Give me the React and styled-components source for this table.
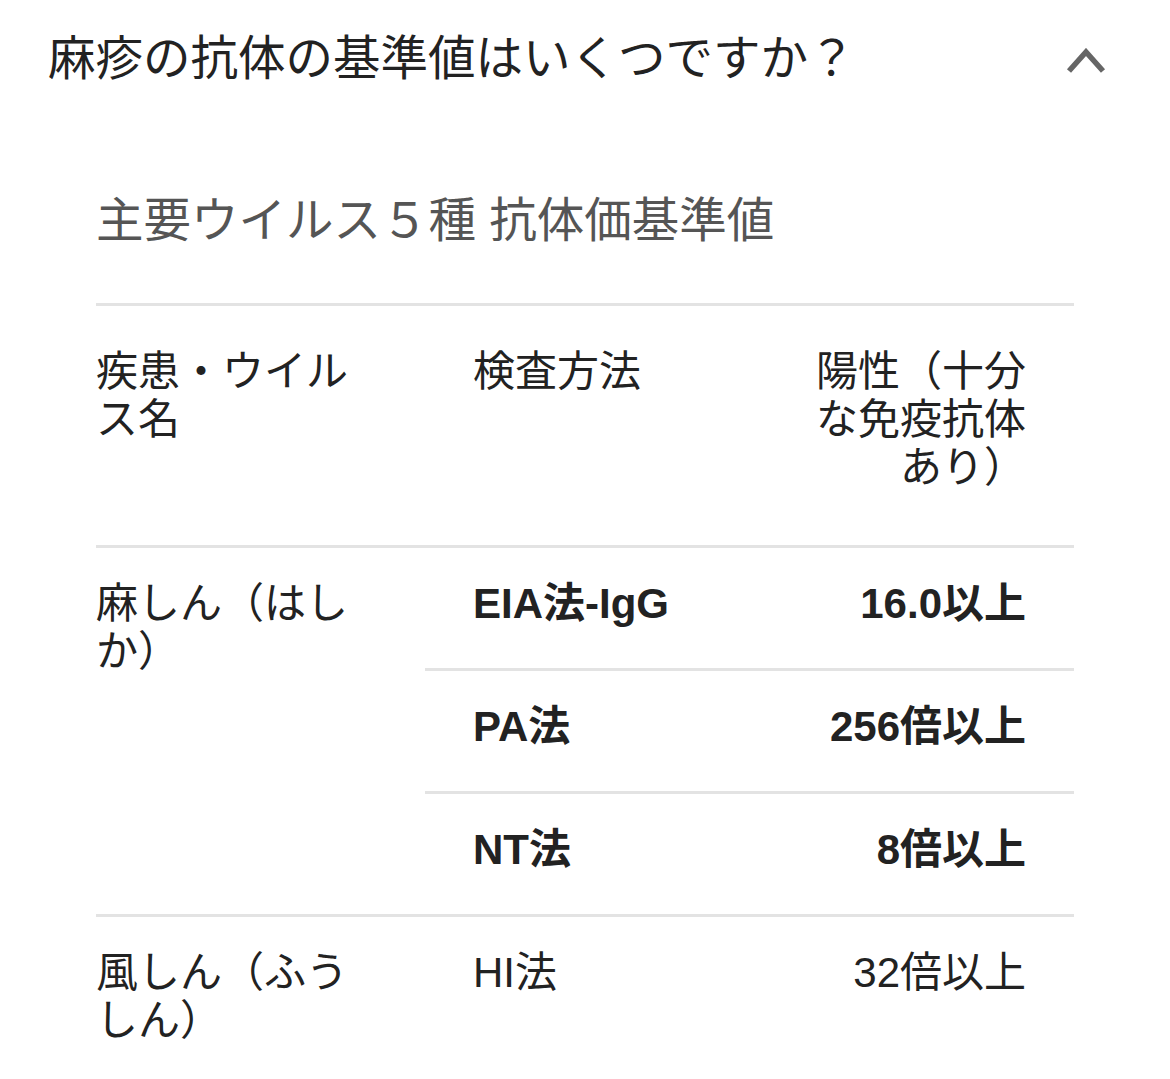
import React from 'react'
import styled, { createGlobalStyle } from 'styled-components'

const GlobalStyle = createGlobalStyle`
    html, body {
        margin: 0;
        padding: 0;
        background: #fff;
        overflow: hidden;
    }
    body {
        font-family: "Liberation Sans", "Noto Sans CJK JP", sans-serif;
        color: #222;
    }
`

const Page = styled.div`
    padding: 0 48px;
`
const Header = styled.div`
    display: flex;
    align-items: center;
    justify-content: space-between;
    height: 118px;
`
const Question = styled.h2`
    margin: 0;
    font-size: 47.5px;
    line-height: 56px;
    font-weight: 400;
    color: #222;
`
const Toggle = styled.button`
    display: flex;
    align-items: center;
    justify-content: center;
    width: 40px;
    height: 40px;
    margin: 4px 16px 0 0;
    padding: 0;
    border: 0;
    background: none;
`
const Panel = styled.div`
    padding: 75px 48px 0;
`
const Subtitle = styled.h3`
    margin: 0 0 54px;
    font-size: 47.5px;
    line-height: 56px;
    font-weight: 400;
    color: #555;
`
const Table = styled.table`
    width: 100%;
    border-collapse: collapse;
    table-layout: fixed;
`
const Cell = styled.td`
    box-sizing: border-box;
    width: ${p => p.$w || 'auto'};
    padding: ${p => (p.$head ? '42px 48px 53px' : '32px 48px 40px')};
    padding-left: ${p => (p.$first ? '0' : '48px')};
    border-top: 3px solid #e3e3e3;
    font-size: 42px;
    line-height: 48px;
    font-weight: ${p => (p.$bold ? 700 : 400)};
    text-align: ${p => (p.$right ? 'right' : 'left')};
    vertical-align: top;
    color: #222;
`

const Chevron = () => (
    <svg width="40" height="26" viewBox="0 0 40 26">
        <polyline points="3,23 20,4 37,23" fill="none" stroke="#666" strokeWidth="5.5" />
    </svg>
)

const rows = [
    {
        name: '麻しん（はしか）',
        tests: [
            { method: 'EIA法-IgG', value: '16.0以上', bold: true },
            { method: 'PA法', value: '256倍以上', bold: true },
            { method: 'NT法', value: '8倍以上', bold: true },
        ],
    },
    {
        name: '風しん（ふうしん）',
        tests: [{ method: 'HI法', value: '32倍以上' }],
    },
]

const App = () => {
    return (
        <Page>
            <GlobalStyle />
            <Header>
                <Question>麻疹の抗体の基準値はいくつですか？</Question>
                <Toggle aria-label="閉じる">
                    <Chevron />
                </Toggle>
            </Header>

            <Panel>
                <Subtitle>主要ウイルス５種 抗体価基準値</Subtitle>
                <Table>
                    <thead>
                        <tr>
                            <Cell as="th" $head $first $w="329px">疾患・ウイルス名</Cell>
                            <Cell as="th" $head>検査方法</Cell>
                            <Cell as="th" $head $right $w="321px">陽性（十分な免疫抗体あり）</Cell>
                        </tr>
                    </thead>
                    <tbody>
                        {rows.map(row =>
                            row.tests.map((t, i) => (
                                <tr key={row.name + t.method}>
                                    {i === 0 && (
                                        <Cell $first rowSpan={row.tests.length}>{row.name}</Cell>
                                    )}
                                    <Cell $bold={t.bold}>{t.method}</Cell>
                                    <Cell $bold={t.bold} $right>{t.value}</Cell>
                                </tr>
                            ))
                        )}
                    </tbody>
                </Table>
            </Panel>
        </Page>
    )
}

export default App
